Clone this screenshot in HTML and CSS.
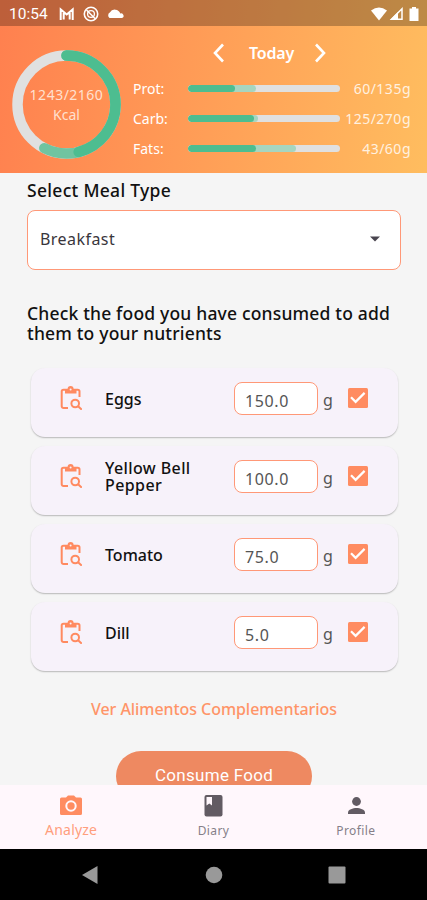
FILE: index.html
```html
<!DOCTYPE html>
<html lang="en">
<head>
<meta charset="UTF-8">
<meta name="viewport" content="width=device-width, initial-scale=1.0">
<title>Analyze</title>
<link rel="stylesheet" href="styles.css">
</head>
<body>

<!-- Shared icons -->
<svg class="sprite" width="0" height="0">
  <symbol id="icon-food" viewBox="0 0 22 24">
    <path d="M8 22H3.500a1.800 1.800 0 0 1-1.800-1.800V5.500A1.800 1.800 0 0 1 3.500 3.700h14.200a1.800 1.800 0 0 1 1.800 1.800V11" fill="none" stroke="currentColor" stroke-width="2"/>
    <path d="M5 3h2.600a3 3 0 0 1 6 0h2.900v4.500H5z" fill="currentColor"/>
    <circle cx="10.600" cy="3.500" r="1" fill="#f7f2fa"/>
    <circle cx="15.200" cy="17.500" r="3.800" fill="none" stroke="currentColor" stroke-width="2"/>
    <path d="M17.800 20l4 3.700" stroke="currentColor" stroke-width="2"/>
  </symbol>
  <symbol id="icon-check" viewBox="0 0 20 20">
    <rect width="20" height="20" rx="1.500" fill="#ff8c61"/>
    <path d="M3 9.300l4.600 4.600 9-9" fill="none" stroke="#fff" stroke-width="2.200"/>
  </symbol>
</svg>

<div class="screen">
  <header class="header">
    <div class="status-bar">
      <span class="clock">10:54</span>
      <svg class="status-left" width="68" height="16" viewBox="0 0 68 16">
        <path d="M2.700 14V3.500l6 5 6-5V14M5.700 13.500V7M11.700 13.500V7" fill="none" stroke="#fff" stroke-width="2"/>
        <circle cx="33" cy="8" r="6.700" fill="none" stroke="#fff" stroke-width="1.600"/>
        <circle cx="33" cy="8" r="3.400" fill="none" stroke="#fff" stroke-width="1.300"/>
        <path d="M28.500 4l9 9" stroke="#fff" stroke-width="1.500"/>
        <path d="M51.500 12a3.300 3.300 0 0 1 .3-5.500 5.800 5.800 0 0 1 10.500 1A2.400 2.400 0 0 1 64 12z" fill="#fff"/>
      </svg>
      <svg class="status-right" width="50" height="16" viewBox="0 0 50 16">
        <path d="M0 4.500Q8 -1.500 16 4.500L8 14.500z" fill="#fff"/>
        <path d="M31 2.800V13.300H20.500z" fill="none" stroke="#fff" stroke-width="1.500"/>
        <path d="M19 14L27 6v8z" fill="#fff"/>
        <path d="M38.500 2.500H41V1h4v1.500h2.500V15h-9z" fill="#fff"/>
      </svg>
    </div>

    <div class="summary">
      <div class="ring">
        <svg width="109" height="109" viewBox="0 0 109 109">
          <g fill="none" stroke-width="10.5" stroke-linecap="round" transform="rotate(-90 54.5 54.5)">
            <circle cx="54.5" cy="54.5" r="49" stroke="#e0e0e0"/>
            <circle cx="54.5" cy="54.5" r="49" stroke="#70c4a0" pathLength="100" stroke-dasharray="57.5 100"/>
            <circle cx="54.5" cy="54.5" r="49" stroke="#4dbd90" pathLength="100" stroke-dasharray="46 100"/>
          </g>
        </svg>
        <div class="ring-label"><span class="kcal">1243/2160</span><span>Kcal</span></div>
      </div>

      <div class="macros">
        <div class="day">
          <svg width="12" height="20" viewBox="0 0 12 20"><path d="M10 1.500L2 10l8 8.500" fill="none" stroke="#fff" stroke-width="2.600"/></svg>
          <span>Today</span>
          <svg width="12" height="20" viewBox="0 0 12 20"><path d="M2 1.500L10 10l-8 8.500" fill="none" stroke="#fff" stroke-width="2.600"/></svg>
        </div>
        <div class="macro">
          <span class="macro-name">Prot:</span>
          <div class="bar"><div class="planned" style="width: 44.5%"></div><div class="eaten" style="width: 31%"></div></div>
          <span class="macro-value">60/135g</span>
        </div>
        <div class="macro">
          <span class="macro-name">Carb:</span>
          <div class="bar"><div class="planned" style="width: 46%"></div><div class="eaten" style="width: 43.5%"></div></div>
          <span class="macro-value">125/270g</span>
        </div>
        <div class="macro">
          <span class="macro-name">Fats:</span>
          <div class="bar"><div class="planned" style="width: 71%"></div><div class="eaten" style="width: 45%"></div></div>
          <span class="macro-value">43/60g</span>
        </div>
      </div>
    </div>
  </header>

  <main class="content">
    <h1 class="title">Select Meal Type</h1>
    <div class="select">
      <span>Breakfast</span>
      <svg width="10" height="6" viewBox="0 0 10 6"><path d="M0 .5h10L5 5.500z" fill="#49454f"/></svg>
    </div>
    <h2 class="hint">Check the food you have consumed to add<br>them to your nutrients</h2>

    <!-- Food list -->
    <div class="foods">
      <div class="food">
        <svg class="food-icon"><use href="#icon-food"/></svg>
        <span class="food-name">Eggs</span>
        <span class="amount">150.0</span><span class="unit">g</span>
        <svg class="check"><use href="#icon-check"/></svg>
      </div>
      <div class="food">
        <svg class="food-icon"><use href="#icon-food"/></svg>
        <span class="food-name long">Yellow Bell<br>Pepper</span>
        <span class="amount">100.0</span><span class="unit">g</span>
        <svg class="check"><use href="#icon-check"/></svg>
      </div>
      <div class="food">
        <svg class="food-icon"><use href="#icon-food"/></svg>
        <span class="food-name">Tomato</span>
        <span class="amount">75.0</span><span class="unit">g</span>
        <svg class="check"><use href="#icon-check"/></svg>
      </div>
      <div class="food">
        <svg class="food-icon"><use href="#icon-food"/></svg>
        <span class="food-name">Dill</span>
        <span class="amount">5.0</span><span class="unit">g</span>
        <svg class="check"><use href="#icon-check"/></svg>
      </div>
    </div>

    <a class="more">Ver Alimentos Complementarios</a>
    <div class="consume">Consume Food</div>
  </main>

  <nav class="tabs">
    <div class="tab active">
      <svg width="24" height="24" viewBox="0 0 24 24"><path d="M2.500 4.500H7l2-2h6l2 2h4.500A1.500 1.500 0 0 1 23 6v14.500a1.500 1.500 0 0 1-1.500 1.500h-19A1.500 1.500 0 0 1 1 20.500V6a1.500 1.500 0 0 1 1.500-1.500z" fill="#ff8c61"/><circle cx="12" cy="13" r="4.700" fill="none" stroke="#fff7fc" stroke-width="2"/></svg>
      <span>Analyze</span>
    </div>
    <div class="tab">
      <svg width="24" height="24" viewBox="0 0 24 24"><rect x="3.5" y="2" width="18" height="21.500" rx="2" fill="#625b63"/><path d="M5.500 4h5.500v8.500l-2.700-2-2.800 2z" fill="#fff7fc"/></svg>
      <span>Diary</span>
    </div>
    <div class="tab">
      <svg width="24" height="24" viewBox="0 0 24 24"><circle cx="12.500" cy="8.500" r="4.400" fill="#625b63"/><path d="M4 21v-1.500c0-3 5-4.500 8.500-4.500s8.500 1.500 8.500 4.500V21z" fill="#625b63"/></svg>
      <span>Profile</span>
    </div>
  </nav>

  <div class="system-nav">
    <svg width="18" height="20" viewBox="0 0 18 20"><path d="M16.500 1v18L1 10z" fill="#999"/></svg>
    <svg width="18" height="18" viewBox="0 0 18 18"><circle cx="9" cy="9" r="8.300" fill="#999"/></svg>
    <svg width="18" height="18" viewBox="0 0 18 18"><rect x=".5" y=".5" width="17" height="17" rx="1" fill="#999"/></svg>
  </div>
</div>

</body>
</html>
```
FILE: styles.css
```css
* { box-sizing: border-box; }
body { margin: 0; font-family: "Noto Sans", sans-serif; color: #1d1b20; }
svg { display: block; flex: none; }
.sprite { position: absolute; }
.screen { width: 427px; height: 900px; display: flex; flex-direction: column; overflow: hidden; background: #f5f5f5; }

/* Header */
.header { flex: none; height: 173px; background: linear-gradient(97deg, #ff804f, #ffbd5f); color: #fff; }
.status-bar { height: 26px; display: flex; align-items: center; padding: 2px 6px 0 9px; background: rgba(0, 0, 0, 0.26); }
.clock { width: 49px; font: 400 15.5px Roboto, sans-serif; }
.status-right { margin-left: auto; }
.summary { display: flex; }
.ring { position: relative; margin: 24px 12px 0 12px; width: 109px; height: 109px; }
.ring-label { position: absolute; inset: 0; display: flex; flex-direction: column; align-items: center; justify-content: center; font-size: 14px; line-height: 20px; color: #ffe0cf; }
.kcal { letter-spacing: 0.5px; }
.macros { flex: 1; padding: 16px 16px 0 0; }
.day { display: flex; justify-content: center; align-items: center; gap: 20px; height: 22px; margin: 0 0 9px -5px; font-size: 16px; font-weight: 600; letter-spacing: -0.2px; }
.day span { padding-left: 4px; }
.macro { display: flex; align-items: center; height: 30.4px; font-size: 14px; }
.macro-name { width: 55px; }
.bar { position: relative; width: 152px; height: 7px; border-radius: 4px; background: #e0e0e0; overflow: hidden; }
.planned, .eaten { position: absolute; top: 0; left: 0; height: 7px; border-radius: 4px; }
.planned { background: #a6d5c0; }
.eaten { background: #4dbd90; }
.macro-value { flex: 1; text-align: right; color: #fff1e0; letter-spacing: 0.5px; white-space: nowrap; }

/* Content */
.content { flex: 1; min-height: 0; overflow: hidden; display: flex; flex-direction: column; padding: 5px 26px 0 27px; }
.title, .hint { margin: 0; font-size: 17.5px; font-weight: 500; color: #111; }
.title { line-height: 24px; letter-spacing: 0.3px; }
.select { flex: none; height: 60px; margin-top: 8px; border: 1px solid #ff9877; border-radius: 8px; background: #fff; display: flex; align-items: center; justify-content: space-between; padding: 0 20px 2px 12px; font-size: 16px; letter-spacing: 0.45px; color: #39363c; }
.hint { margin-top: 33px; line-height: 20px; letter-spacing: 0.18px; }
.foods { display: flex; flex-direction: column; gap: 9px; margin: 25px 3px 0 4px; }
.food { height: 69px; padding: 14px 29px 0 28px; display: flex; border-radius: 14px; background: #f7f2fa; box-shadow: 0 1px 1.5px rgba(0, 0, 0, 0.25); }
.food-icon { width: 22px; height: 24px; margin: 4px 0 0 1px; color: #ff8a60; }
.food-name { display: flex; align-items: center; width: 129px; height: 34px; margin-left: 23px; font-size: 16px; font-weight: 500; line-height: 17px; color: #111; }
.food-name.long { letter-spacing: 0.4px; }
.amount { width: 84px; height: 33px; border: 1px solid #ff9877; border-radius: 8px; background: #fff; padding: 2px 0 0 10px; font-size: 16px; line-height: 32px; letter-spacing: 0.6px; color: #555; }
.unit { width: 30px; padding: 2px 0 0 5px; font-size: 16px; line-height: 32px; color: #555; }
.check { width: 20px; height: 20px; margin-top: 6px; }
.more { margin-top: 26px; text-align: center; font-size: 16px; line-height: 24px; font-weight: 500; letter-spacing: -0.06px; color: #ff9468; }
.consume { flex: none; align-self: center; width: 196px; height: 50px; margin-top: 30px; border-radius: 25px; background: #ee8961; color: #fff; text-align: center; font: 400 17px/48px Roboto, sans-serif; letter-spacing: 0.3px; }

/* Bottom tabs */
.tabs { flex: none; height: 64px; display: flex; background: #fff7fc; }
.tab { flex: 1; display: flex; flex-direction: column; align-items: center; padding-top: 8px; font-size: 12px; line-height: 28px; letter-spacing: 0.4px; color: #857f88; }
.tab.active { font-size: 14px; line-height: 26px; letter-spacing: 0.2px; color: #ff9e7d; }
.system-nav { flex: none; height: 51px; background: #000; display: flex; align-items: center; justify-content: space-between; padding: 0 81px; }
```
